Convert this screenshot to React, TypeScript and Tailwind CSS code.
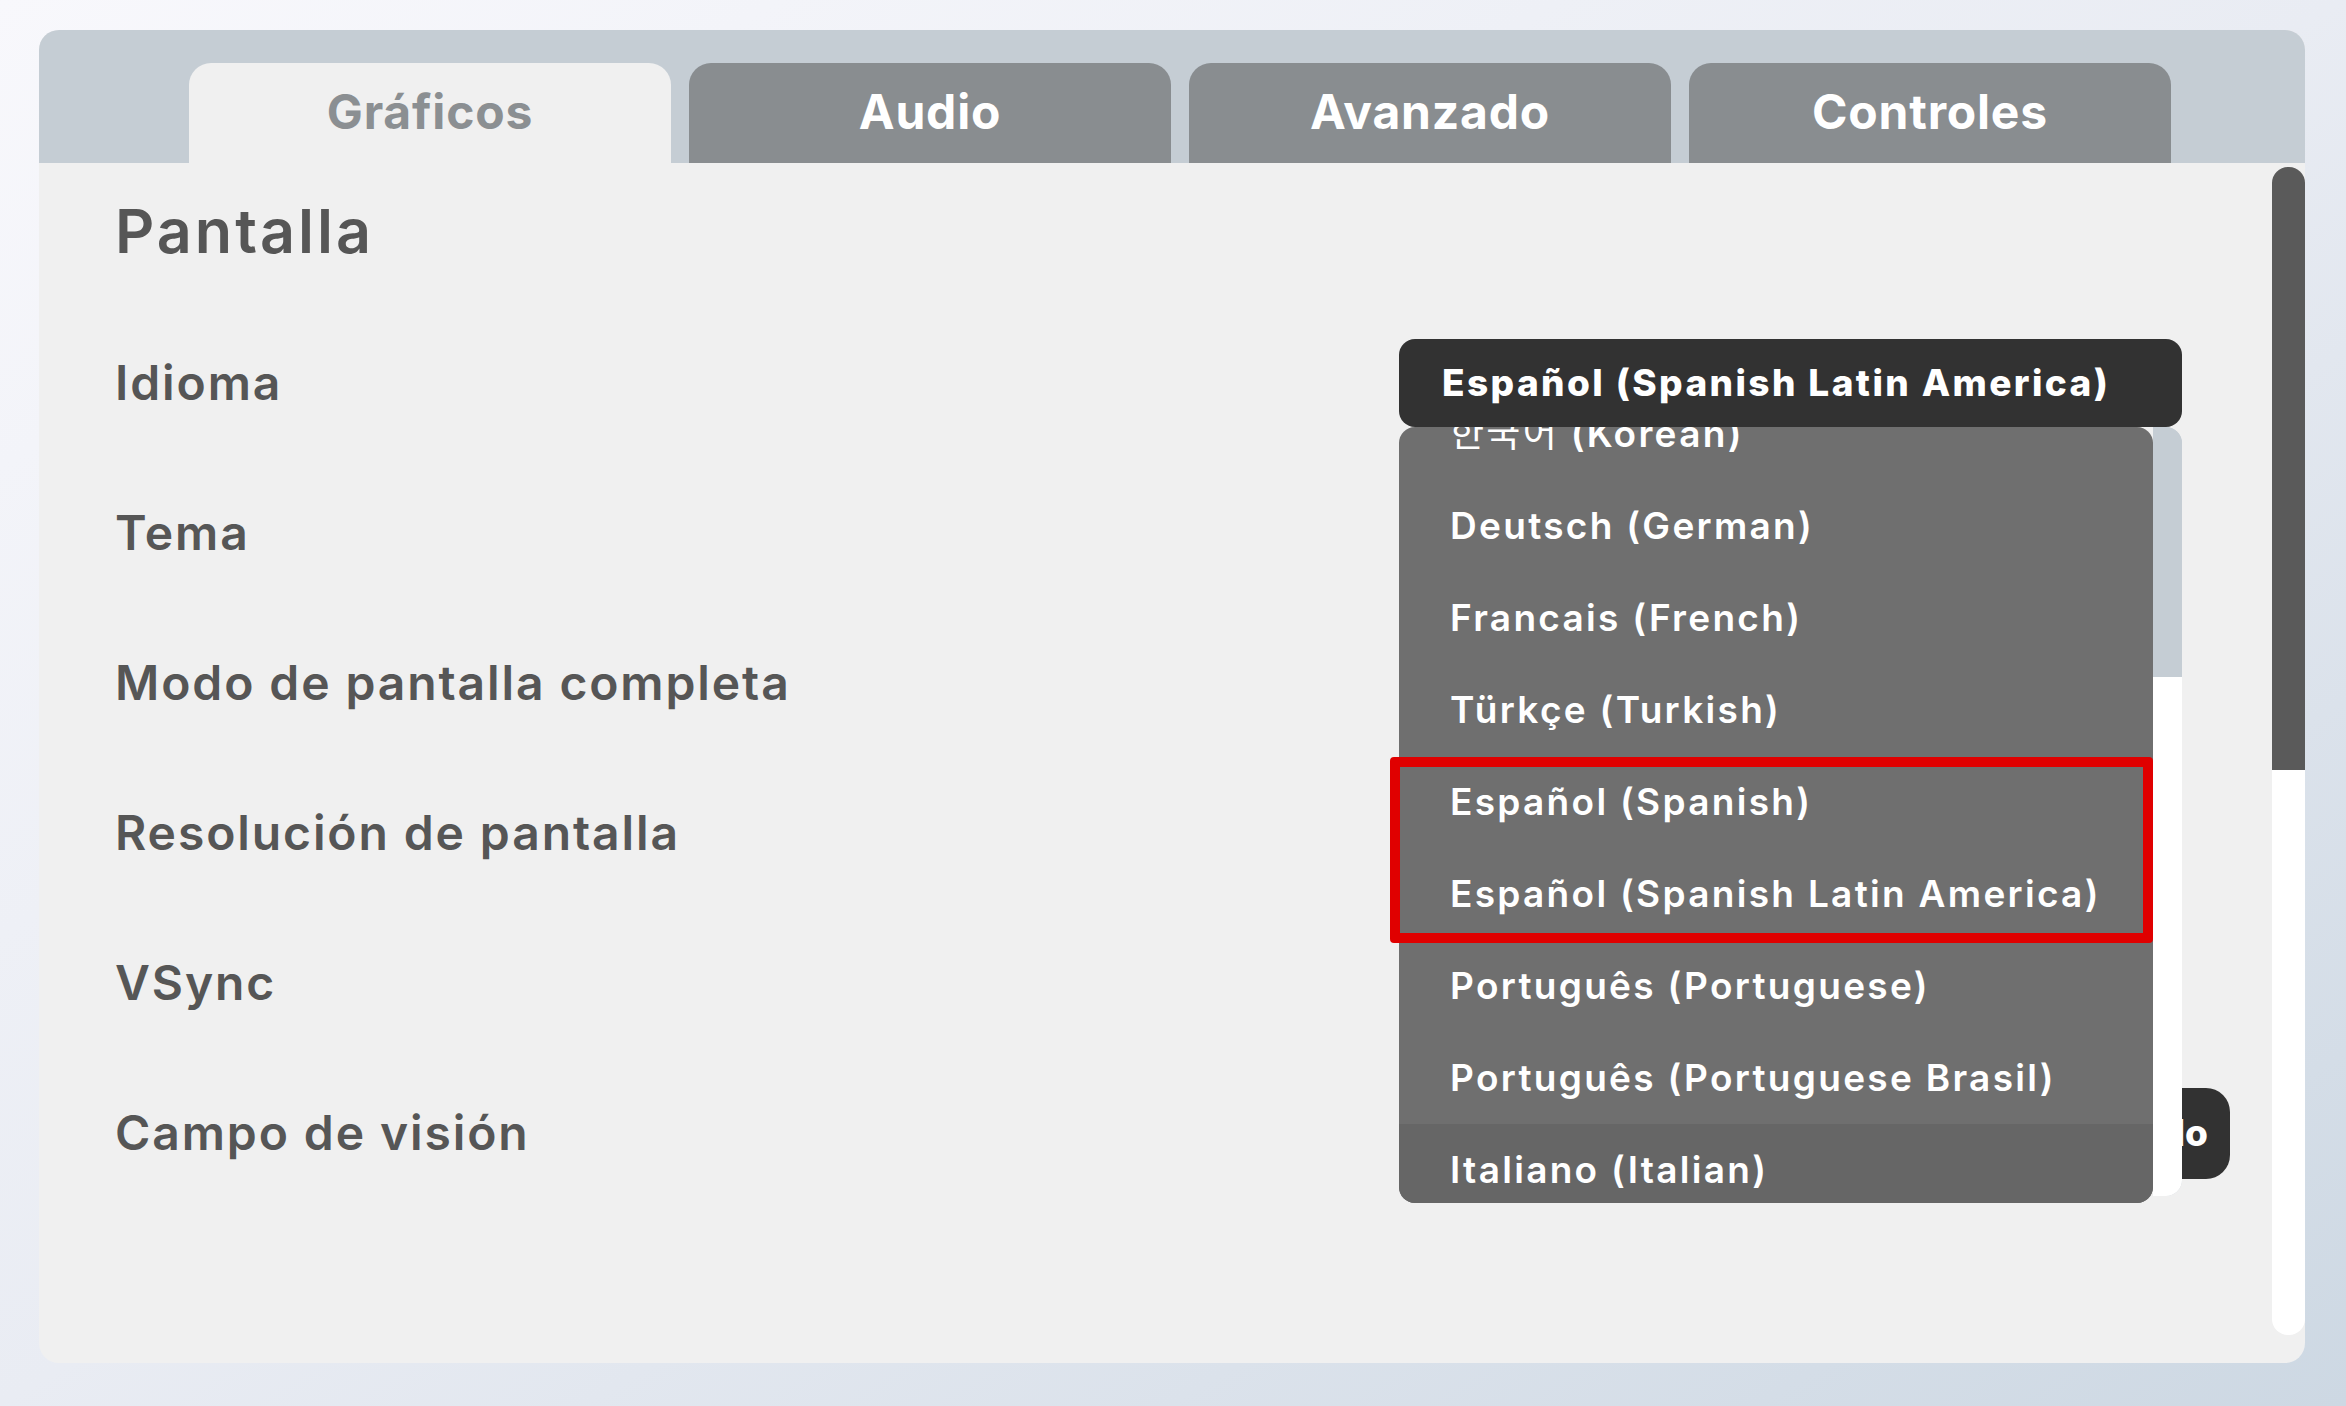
import React from "react";

const FONT = { fontFamily: 'Inter, "Noto Sans CJK KR", sans-serif' };

const tabs = ["Gráficos", "Audio", "Avanzado", "Controles"];
const rows = ["Idioma", "Tema", "Modo de pantalla completa", "Resolución de pantalla", "VSync", "Campo de visión"];
const langs = [
  "한국어 (Korean)",
  "Deutsch (German)",
  "Francais (French)",
  "Türkçe (Turkish)",
  "Español (Spanish)",
  "Español (Spanish Latin America)",
  "Português (Portuguese)",
  "Português (Portuguese Brasil)",
  "Italiano (Italian)",
];

function LanguageDropdown() {
  return (
    <div className="relative w-[783px] h-[88px]">
      <div className="h-full w-full rounded-[16px] bg-[#323232] flex items-center pl-[43px]">
        <span className="text-[37px] font-extrabold text-white tracking-[2.4px] whitespace-nowrap">
          Español (Spanish Latin America)
        </span>
      </div>
      <div className="absolute left-0 top-[88px] w-[783px] h-[776px] flex z-10">
        <div className="w-[754px] h-full rounded-[16px] bg-[#6f6f6f] overflow-hidden">
          <div className="flex flex-col mt-[-39px]">
            {langs.map((l, i) => (
              <div
                key={l}
                className={
                  "h-[92px] flex items-center pl-[51px] text-[37px] font-semibold text-white whitespace-nowrap tracking-[2.3px] " +
                  (i === langs.length - 1 ? "bg-[#666666]" : "")
                }
              >
                {i === 0 ? (
                  <span>
                    <span className="font-normal">한국어</span> (Korean)
                  </span>
                ) : (
                  l
                )}
              </div>
            ))}
          </div>
        </div>
        <div className="w-[29px] h-[769px] flex flex-col rounded-tr-[16px] rounded-br-[16px] overflow-hidden bg-[#c5cdd4]">
          <div className="h-[250px] bg-[#c5cdd4] rounded-tr-[16px]" />
          <div className="flex-1 bg-white" />
        </div>
        <div className="absolute left-[-9px] top-[330px] w-[763px] h-[186px] border-[10px] border-[#e00000] rounded-[4px]" />
      </div>
    </div>
  );
}

export default function App() {
  return (
    <div
      className="w-[2346px] h-[1406px] pt-[30px] pl-[39px] bg-gradient-to-br from-[#f8f8fc] via-[#e9ecf3] to-[#cdd8e3]"
      style={FONT}
    >
      <div className="w-[2266px] h-[1333px] rounded-[20px] overflow-hidden flex flex-col bg-[#f0f0f0]">
        <div className="h-[133px] bg-[#c5cdd4] flex items-end pl-[150px] gap-[18px]">
          {tabs.map((t, i) => (
            <div
              key={t}
              className={
                "w-[482px] h-[100px] rounded-t-[22px] flex items-center justify-center pb-[2px] text-[48px] font-bold tracking-[0.8px] " +
                (i === 0 ? "bg-[#f0f0f0] text-[#8b8f92]" : "bg-[#898d90] text-white")
              }
            >
              {t}
            </div>
          ))}
        </div>
        <div className="flex-1 flex pb-[28px]">
          <div className="flex-1 flex flex-col pl-[76px]">
            <div className="h-[145px] pb-[7px] flex items-center">
              <h1 className="text-[61px] font-semibold text-[#565656] tracking-[3px]">Pantalla</h1>
            </div>
            {rows.map((r, i) => (
              <div key={r} className="h-[150px] flex items-center">
                <div className="w-[1284px] text-[48px] font-semibold text-[#565656] tracking-[1.9px]">{r}</div>
                {i === 0 && <LanguageDropdown />}
                {i === 5 && (
                  <div className="w-[831px] h-[91px] rounded-[24px] bg-[#323232] flex items-center justify-end pr-[22px]">
                    <span className="text-[37px] font-extrabold text-white">Predeterminado</span>
                  </div>
                )}
              </div>
            ))}
          </div>
          <div className="w-[33px] pt-[4px] flex flex-col">
            <div className="h-[603px] bg-[#5a5a5a] rounded-t-[16px]" />
            <div className="flex-1 bg-white rounded-b-[16px]" />
          </div>
        </div>
      </div>
    </div>
  );
}
